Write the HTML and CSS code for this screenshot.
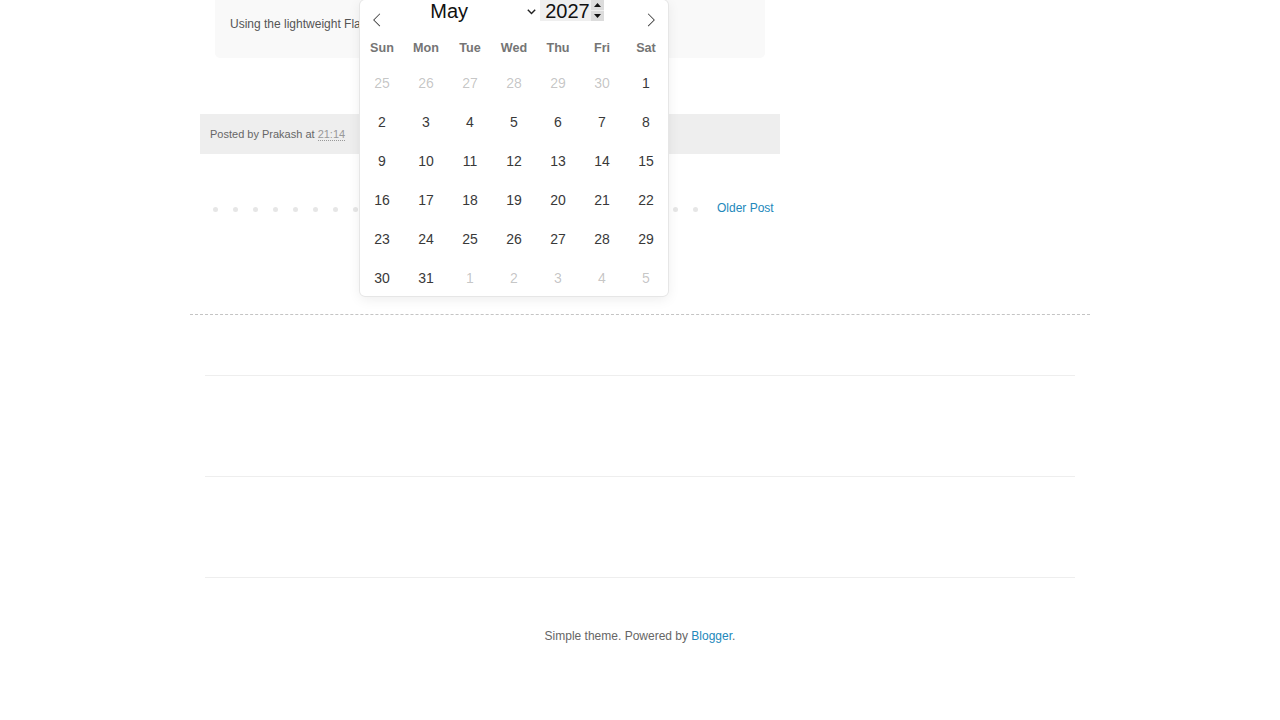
FILE: index.html
```html
<!DOCTYPE html>
<html lang="en">
<head>
<meta charset="utf-8">
<title>Flatpickr in Blogger</title>
<link rel="stylesheet" href="styles.css">
</head>
<body>
<div class="page">
  <div class="main">
    <div class="post-body">Using the lightweight Flatpickr library to add a date picker to Blogger:</div>
    <div class="post-footer">Posted by Prakash at <abbr class="time" title="2027-05-01">21:14</abbr></div>
    <div class="pager">
      <span class="dot"></span><span class="dot"></span><span class="dot"></span><span class="dot"></span><span class="dot"></span>
      <span class="dot"></span><span class="dot"></span><span class="dot"></span><span class="dot"></span><span class="dot"></span>
      <span class="dot"></span><span class="dot"></span><span class="dot"></span><span class="dot"></span><span class="dot"></span>
      <span class="dot"></span><span class="dot"></span><span class="dot"></span><span class="dot"></span><span class="dot"></span>
      <span class="dot"></span><span class="dot"></span><span class="dot"></span><span class="dot"></span><span class="dot"></span>
      <a class="older" href="#">Older Post</a>
    </div>
  </div>
  <div class="divider"></div>
  <div class="section first"></div>
  <div class="section"></div>
  <div class="section"></div>
  <div class="attribution">Simple theme. Powered by <a href="#">Blogger</a>.</div>
</div>

<div class="calendar">
  <div class="cal-head">
    <span class="nav prev"><svg width="14" height="14" viewBox="0 0 17 17"><path d="M5.207 8.471l7.146 7.147-0.707 0.707-7.853-7.854 7.854-7.853 0.707 0.707-7.147 7.146z"/></svg></span>
    <div class="current">
      <span class="month">May<svg class="chev" width="9" height="6" viewBox="0 0 9 6"><polyline points="0.8,0.8 4.5,4.6 8.2,0.8" fill="none" stroke="#222" stroke-width="1.4"/></svg></span>
      <span class="year">2027<span class="spin"><span class="sp up"><svg width="7" height="4" viewBox="0 0 7 4"><polygon points="3.5,0 7,4 0,4"/></svg></span><span class="sp down"><svg width="7" height="4" viewBox="0 0 7 4"><polygon points="0,0 7,0 3.5,4"/></svg></span></span></span>
    </div>
    <span class="nav next"><svg width="14" height="14" viewBox="0 0 17 17"><path d="M13.207 8.472l-7.854 7.854-0.707-0.707 7.146-7.146-7.146-7.148 0.707-0.707 7.854 7.853z"/></svg></span>
  </div>
  <div class="weekdays">
    <span>Sun</span><span>Mon</span><span>Tue</span><span>Wed</span><span>Thu</span><span>Fri</span><span>Sat</span>
  </div>
  <div class="days">
    <span class="other">25</span><span class="other">26</span><span class="other">27</span><span class="other">28</span><span class="other">29</span><span class="other">30</span><span>1</span>
    <span>2</span><span>3</span><span>4</span><span>5</span><span>6</span><span>7</span><span>8</span>
    <span>9</span><span>10</span><span>11</span><span>12</span><span>13</span><span>14</span><span>15</span>
    <span>16</span><span>17</span><span>18</span><span>19</span><span>20</span><span>21</span><span>22</span>
    <span>23</span><span>24</span><span>25</span><span>26</span><span>27</span><span>28</span><span>29</span>
    <span>30</span><span>31</span><span class="other">1</span><span class="other">2</span><span class="other">3</span><span class="other">4</span><span class="other">5</span>
  </div>
</div>
</body>
</html>
```

FILE: styles.css
```css
* { box-sizing: border-box; }
html, body { margin: 0; padding: 0; background: #fff; }
body {
  font-family: "Liberation Sans", Arial, sans-serif;
  font-size: 12px;
  color: #666;
  overflow: hidden;
}
a { color: #2288bb; text-decoration: none; }

.page { width: 900px; margin: 0 auto; }
.main { width: 580px; margin-left: 10px; }

.post-body {
  margin: -10px 15px 0;
  padding: 26px 15px 25px;
  background: #f9f9f9;
  border-radius: 5px;
  line-height: 17px;
  color: #555;
  white-space: nowrap;
  overflow: hidden;
}

.post-footer {
  margin-top: 56px;
  height: 40px;
  padding: 0 10px;
  line-height: 40px;
  background: #eee;
  font-size: 11px;
  color: #666;
}
.time {
  text-decoration: none;
  border-bottom: 1px dotted #999;
  color: #999;
}

.pager {
  margin-top: 45px;
  height: 20px;
  display: flex;
  align-items: center;
  padding-left: 13px;
  gap: 15px;
}
.dot {
  width: 5px;
  height: 5px;
  border-radius: 50%;
  background: #e6e6e6;
  flex: none;
}
.older { margin-left: 4px; line-height: 17px; margin-top: -1px; }

.divider {
  margin-top: 95px;
  border-top: 1px dashed #c4c4c4;
}
.section {
  margin: 0 15px;
  height: 101px;
  border-bottom: 1px solid #eee;
}
.section.first { height: 61px; }

.attribution {
  margin-top: 50px;
  text-align: center;
  line-height: 17px;
  color: #666;
}

/* Calendar popup */
.calendar {
  position: absolute;
  left: 360px;
  top: 0;
  width: 308px;
  height: 296px;
  background: #fff;
  border-radius: 5px;
  box-shadow: 1px 0 0 #e6e6e6, -1px 0 0 #e6e6e6, 0 1px 0 #e6e6e6, 0 -1px 0 #e6e6e6, 0 3px 13px rgba(0,0,0,0.08);
  font-family: "Liberation Sans", Arial, sans-serif;
  color: #393939;
}
.cal-head {
  height: 34px;
  display: grid;
  grid-template-columns: 34px 1fr 34px;
}
.nav {
  padding: 13px 10px 0;
  fill: #3a3a3a;
}
.nav.next { padding: 13px 10px 0 10px; }
.nav svg { display: block; }
.current {
  justify-self: center;
  display: flex;
  align-items: flex-start;
  color: #111;
  font-size: 20px;
  line-height: 22px;
}
.month {
  width: 116px;
  padding-left: 6px;
  padding-right: 4px;
  display: flex;
  align-items: flex-start;
  justify-content: space-between;
}
.chev { margin-top: 9px; }
.year {
  display: flex;
  align-items: flex-start;
  height: 21px;
  padding-left: 5px;
  background: #efefef;
  line-height: 22px;
}
.spin {
  display: flex;
  flex-direction: column;
  width: 13px;
  margin-left: 1px;
  height: 21px;
  gap: 1px;
}
.sp {
  flex: 1;
  display: flex;
  align-items: center;
  justify-content: center;
  background: #dcdcdc;
  fill: #111;
}
.sp svg { display: block; }

.weekdays {
  display: grid;
  grid-template-columns: repeat(7, 44px);
  height: 28px;
  line-height: 28px;
  text-align: center;
  font-size: 12.6px;
  font-weight: bold;
  color: #757575;
}
.days {
  display: grid;
  grid-template-columns: repeat(7, 44px);
  grid-auto-rows: 39px;
  padding-top: 2px;
  text-align: center;
  font-size: 14px;
  line-height: 39px;
  color: #393939;
}
.days .other { color: rgba(57,57,57,0.3); }
```
